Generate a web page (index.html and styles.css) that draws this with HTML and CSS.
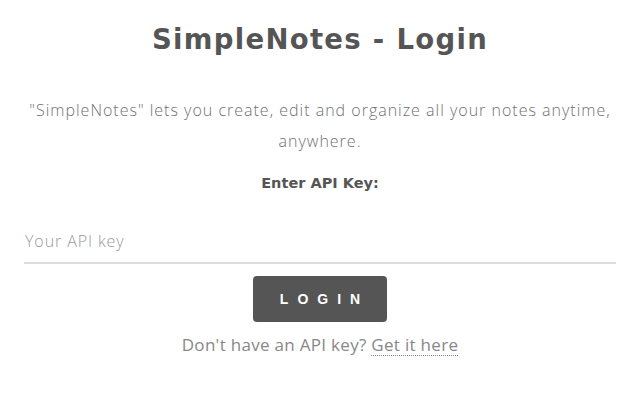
FILE: index.html
```html
<!DOCTYPE html>
<html>
<head>
<meta charset="utf-8">
<link rel="stylesheet" href="styles.css">
</head>
<body>
<main class="page">
  <h1 class="title">SimpleNotes - Login</h1>
  <p class="intro">"SimpleNotes" lets you create, edit and organize all your notes anytime, anywhere.</p>
  <label class="label" for="key">Enter API Key:</label>
  <input class="input" id="key" type="text" placeholder="Your API key">
  <button class="btn">LOGIN</button>
  <p class="footer">Don't have an API key? <a class="link" href="#">Get it here</a></p>
</main>
</body>
</html>
```

FILE: styles.css
```css
html, body { margin: 0; padding: 0; background: #fff; }
.page {
  display: flex;
  flex-direction: column;
  align-items: center;
  padding: 0 24px;
  font-family: "Open Sans", sans-serif;
  color: #555;
}
.title {
  margin: 23px 0 0;
  font-family: "DejaVu Sans", sans-serif;
  font-size: 27.5px;
  line-height: 32px;
  letter-spacing: 1.3px;
  font-weight: 700;
  color: #555;
}
.intro {
  margin: 40px 0 0;
  text-align: center;
  font-size: 16px;
  font-weight: 300;
  line-height: 31px;
  letter-spacing: 1px;
  color: #707070;
}
.label {
  margin-top: 16px;
  font-family: "DejaVu Sans", sans-serif;
  font-weight: 700;
  font-size: 14.5px;
  line-height: 20px;
  color: #555;
}
.input {
  align-self: stretch;
  margin-top: 37px;
  border: none;
  border-bottom: 2px solid #ddd;
  padding: 0 0 10px 1px;
  height: 34px;
  box-sizing: border-box;
  font-family: "Open Sans", sans-serif;
  font-size: 16px;
  line-height: 22px;
  letter-spacing: 0.9px;
  font-weight: 300;
  color: #555;
  outline: none;
}
.input::placeholder { color: #999; }
.btn {
  margin-top: 12px;
  width: 134px;
  height: 46px;
  background: #555;
  color: #fff;
  border: none;
  border-radius: 4px;
  font-family: "Liberation Sans", Arial, sans-serif;
  font-weight: 700;
  font-size: 14px;
  letter-spacing: 9px;
  padding: 0 0 0 9px;
}
.footer {
  margin: 12px 0 0;
  font-size: 17px;
  line-height: 22px;
  letter-spacing: 0.3px;
  font-weight: 400;
  color: #888;
}
.link {
  color: #888;
  text-decoration: underline dotted #888;
  text-decoration-thickness: 1px;
  text-underline-offset: 4px;
}
```
